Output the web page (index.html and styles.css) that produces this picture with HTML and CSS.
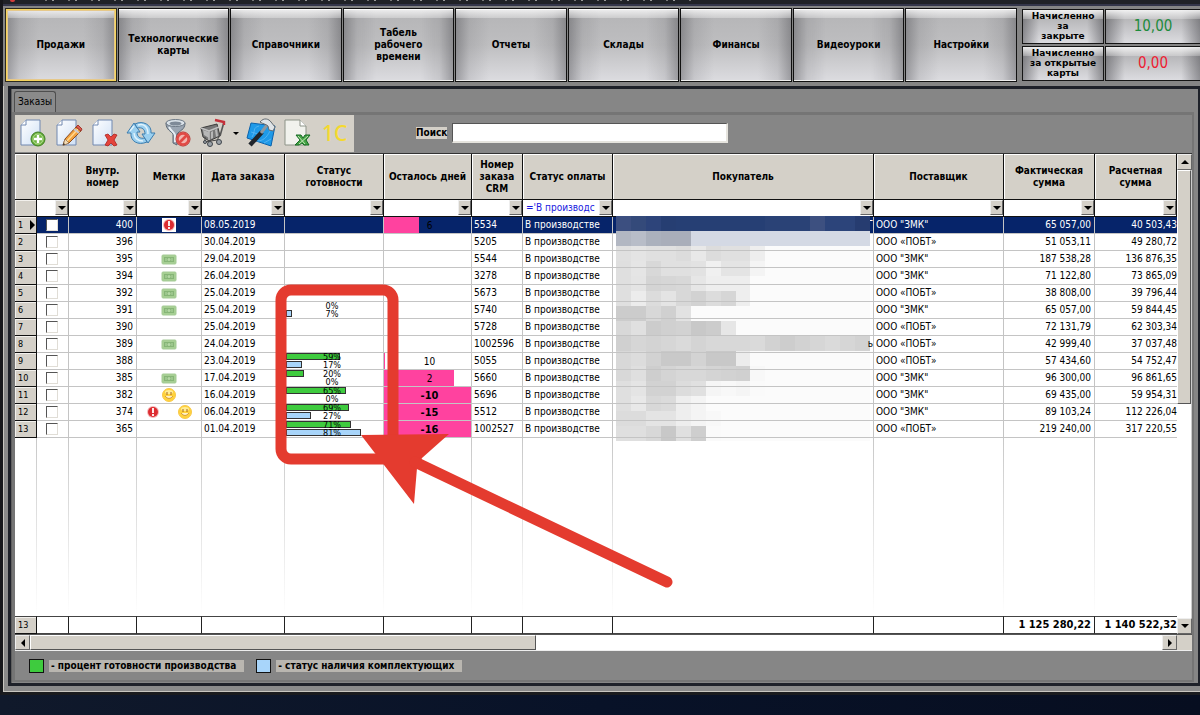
FILE: index.html
```html
<!DOCTYPE html>
<html lang="ru">
<head>
<meta charset="utf-8">
<title>Заказы</title>
<link rel="stylesheet" href="styles.css">
</head>
<body>
<div class="window">
  <div class="titlebar"><span class="title-mark"></span><span class="title-trace"></span></div>
  <header class="ribbon">
    <nav class="menu">
      <button class="tile active">Продажи</button>
      <button class="tile">Технологические<br>карты</button>
      <button class="tile">Справочники</button>
      <button class="tile">Табель<br>рабочего<br>времени</button>
      <button class="tile">Отчеты</button>
      <button class="tile">Склады</button>
      <button class="tile">Финансы</button>
      <button class="tile">Видеоуроки</button>
      <button class="tile">Настройки</button>
    </nav>
    <div class="totals">
      <div class="total-label">Начисленно<br>за<br>закрыте</div><div class="total-value green">10,00</div>
      <div class="total-label">Начисленно<br>за открытые<br>карты</div><div class="total-value red">0,00</div>
    </div>
  </header>
  <main class="panel">
    <div class="tabs"><button class="tab">Заказы</button></div>
    <section class="page">
      <div class="tools-row">
        <div class="toolbar">
          <button class="tool" aria-label="Добавить"><svg viewBox="0 0 30 30"><use href="#doc"/><circle cx="20" cy="21" r="7" fill="#6db33f" stroke="#3d7d22"/><circle cx="20" cy="21" r="5" fill="none" stroke="#b9e098"/><path d="M20 17v8M16 21h8" stroke="#fff" stroke-width="2.4"/></svg></button>
          <button class="tool" aria-label="Изменить"><svg viewBox="0 0 30 30"><use href="#doc"/><path d="M9 27l2-6L22 9l5 4-12 12z" fill="#f3a23c" stroke="#8c4e22"/><path d="M13 23L24 11" stroke="#ffd890" stroke-width="1.6"/><path d="M20 11l5 4" stroke="#c9c9d0" stroke-width="2"/><path d="M22 9l5 4 1-2-4-4z" fill="#db5a4d" stroke="#a3382f"/><path d="M11 21l4 4-6 2.600z" fill="#f4dcb4" stroke="#8c6f52" stroke-width=".7"/><path d="M9 27l.6-2 1.600 1.400z" fill="#222"/></svg></button>
          <button class="tool" aria-label="Удалить"><svg viewBox="0 0 30 30"><use href="#doc"/><path d="M15 17l3-1 3 3 3-3 3 1-3 5 3 5-3 1-3-3-3 3-3-1 3-5z" fill="#e4443c" stroke="#a9231f" stroke-width=".8"/></svg></button>
          <button class="tool" aria-label="Обновить"><svg viewBox="0 0 30 30"><g fill="#9bd0f0" stroke="#3b7cae" stroke-linejoin="round"><path d="M1 15L8 5l6 9h-3c0 5 3 7 8 6l2 4C12 28 4 23 5 15z"/><path d="M29 15l-7 10-6-9h3c0-5-3-7-8-6L9 6c8-4 17 1 16 9z"/></g><path d="M8 8l-4 5M12 7c6-2 10 2 10 9M8 15c0 5 4 8 9 8" fill="none" stroke="#e2f3fc" stroke-width="1.400"/></svg></button>
          <button class="tool" aria-label="Сбросить фильтр"><svg viewBox="0 0 30 30"><path d="M4 5c0 7 5 8 7 11v9l4 2V16c2-3 8-4 8-11z" fill="#9ba6b3" stroke="#5a6674"/><path d="M7 9c2 4 5 5 6 8v7" fill="none" stroke="#e5edf4" stroke-width="2"/><ellipse cx="13.500" cy="5" rx="9.500" ry="3.500" fill="#dbe3ea" stroke="#6c7885"/><ellipse cx="13.500" cy="5.500" rx="6" ry="2" fill="#7e8a98"/><circle cx="21" cy="21" r="7" fill="#f3dada" stroke="#b22b28"/><circle cx="21" cy="21" r="5.500" fill="#f2b5af" stroke="#e14a45" stroke-width="2.400"/><path d="M17 25l8-8" stroke="#e14a45" stroke-width="2.600"/></svg></button>
          <button class="tool cart" aria-label="Корзина"><svg viewBox="0 0 30 30"><path d="M3 10l16-4 3 12-11 5-6-4z" fill="#777" stroke="#3c3c3c"/><path d="M3 10l8 3 10-4M11 13v9" stroke="#c2c2c2" fill="none" stroke-width="1.400"/><path d="M5 12l6 2v6l-5-3zM13 14l2-1v7l-2 1zM17 12l2-1 1 7-2 1z" fill="#b7b7b7"/><path d="M22 18l4-14" stroke="#555" stroke-width="1.600"/><path d="M17 2l9 2v3" stroke="#c4303a" stroke-width="2.400" fill="none"/><path d="M7 19v5l12-2 2-3" stroke="#444" fill="none"/><g fill="#9ba2a8" stroke="#40464c"><circle cx="12" cy="26" r="2.500"/><circle cx="21" cy="24" r="2.500"/><circle cx="7" cy="24" r="1.500"/></g></svg><span class="caret"></span></button>
          <button class="tool" aria-label="Инструменты"><svg viewBox="0 0 30 30"><path d="M5 5l24 3-4 20L1 20z" fill="#1f9ae8" stroke="#0b62ac"/><path d="M6 19c4-6 0-9 7-11M11 23c8 0 11-6 14-12M18 25l7-4M5 14l7 2" stroke="#5fb9f2" fill="none" stroke-width=".8"/><path d="M4 27L16 14" stroke="#20252b" stroke-width="4.500"/><path d="M15 15l6-8" stroke="#8f979e" stroke-width="3"/><path d="M14 4c4-5 9-3 11 0l4 5-2 4-4-1-1-4c-2-2-5-2-8-4z" fill="#dfe4e8" stroke="#626a70"/></svg></button>
          <button class="tool" aria-label="Экспорт в Excel"><svg viewBox="0 0 30 30"><path d="M3 2h15l6 6v19H3z" fill="#f1f2ed" stroke="#8d9388"/><path d="M18 2v6h6" fill="#fff" stroke="#8d9388"/><path d="M14 17h5l2 3 2-3h5l-4 5 3 5h-5l-2-2-3 2h-4l5-5z" fill="#45a345" stroke="#176b25"/><path d="M16 18l7 8M26 18l-9 8" stroke="#c3e7b7"/></svg></button>
          <button class="tool one-c">1C</button>
        </div>
        <label class="search-label" for="search">Поиск</label>
        <input class="search" id="search" type="text">
      </div>
      <div class="grid">
        <div class="grid-body">
          <table class="orders">
            <colgroup><col class="w22"><col class="w32"><col class="w68"><col class="w65"><col class="w83"><col class="w99"><col class="w88"><col class="w51"><col class="w90"><col><col class="w130"><col class="w91"><col class="w82"></colgroup>
            <thead>
              <tr class="heads"><th></th><th></th><th>Внутр.<br>номер</th><th>Метки</th><th>Дата заказа</th><th>Статус<br>готовности</th><th>Осталось дней</th><th>Номер<br>заказа<br>CRM</th><th>Статус оплаты</th><th>Покупатель</th><th>Поставщик</th><th>Фактическая<br>сумма</th><th>Расчетная<br>сумма</th></tr>
              <tr class="filters" id="filters"><td class="rownum"></td></tr>
            </thead>
            <tbody id="rows"></tbody>
            <tfoot><tr><td class="rownum">13</td><td></td><td></td><td></td><td></td><td></td><td></td><td></td><td></td><td></td><td></td><td class="num">1 125 280,22</td><td class="num">1 140 522,32</td></tr></tfoot>
          </table>
          <div class="vscroll"><button class="arrow up" aria-label="Вверх"></button><div class="vthumb"></div><button class="arrow down" aria-label="Вниз"></button></div>
        </div>
        <div class="hscroll"><button class="arrow left" aria-label="Влево"></button><div class="hthumb"></div><button class="arrow right" aria-label="Вправо"></button><span class="corner"></span></div>
      </div>
      <div class="legend">
        <span class="swatch made"></span><span class="legend-text">- процент готовности производства</span>
        <span class="swatch parts"></span><span class="legend-text">- статус наличия комплектующих</span>
      </div>
    </section>
  </main>
</div>
<svg class="callout" viewBox="0 0 1200 715" aria-hidden="true">
  <rect x="281" y="290" width="112" height="169" rx="10" fill="none" stroke="#e43b2f" stroke-width="11"/>
  <path d="M361 435L449 434L422 458L417 468L414 504Z" fill="#e43b2f"/>
  <path d="M415 462L667 582" stroke="#e43b2f" stroke-width="11" stroke-linecap="round"/>
</svg>
<svg class="defs" aria-hidden="true">
  <defs>
    <linearGradient id="paper" x2="1" y2="1"><stop offset="0" stop-color="#fff"/><stop offset="1" stop-color="#cfe0f5"/></linearGradient>
    <g id="doc"><path d="M3 7l5-5h14v25H3z" fill="url(#paper)" stroke="#7088b0"/><path d="M3 7h5V2" fill="#fff" stroke="#7088b0"/></g>
    <g id="cash"><rect x="1" y="1" width="14" height="9" rx="1" fill="#a6cf93" stroke="#a5cb96"/><rect x="3" y="3" width="10" height="5" fill="#86b577"/><circle cx="8" cy="5.500" r="1.500" fill="#b4d8a5"/><path d="M5 4v3M11 4v3" stroke="#b4d8a5"/></g>
    <g id="alert"><circle cx="7" cy="7" r="6" fill="#f5b9b9"/><circle cx="7" cy="7" r="5" fill="#dd2c31"/><path d="M7 3v5M7 9v2" stroke="#fff" stroke-width="1.800"/></g>
    <g id="smile"><circle cx="7" cy="7" r="6.500" fill="#ffd23c" stroke="#f8c848"/><ellipse cx="7" cy="4" rx="4" ry="2" fill="#ffec96"/><path d="M5 4v3M9 4v3" stroke="#a8691c"/><path d="M3 8q4 5 8 0" fill="#fff3c8" stroke="#c98a2c" stroke-width=".8"/></g>
  </defs>
</svg>
<script src="app.js"></script>
</body>
</html>
```

FILE: styles.css
```css
* { box-sizing: border-box; }
html, body { height: 100%; }
body {
  margin: 0;
  background: linear-gradient(90deg, #10192b, #081228 50%, #070e20);
  font-family: "DejaVu Sans Condensed", "DejaVu Sans", "Noto Sans", sans-serif;
  font-size: 10px;
  line-height: 12px;
  color: #000;
  position: relative;
  overflow: hidden;
}
button, input { font: inherit; color: inherit; margin: 0; padding: 0; border: 0; }
.window {
  height: calc(100% - 20px);
  display: flex;
  flex-direction: column;
  background: #8a8a8a;
  border-left: 3px solid #17181c;
  border-bottom: 3px solid #1a1b1e;
  box-shadow: inset 1px -1px 0 #c8c6c0;
}
.titlebar { height: 6px; flex: none; background: #202227; border-bottom: 2px solid #34364a; display: flex; align-items: flex-start; }
.title-mark { width: 5px; height: 2px; margin: 0 30px 0 7px; background: #d33e3c; border-radius: 0 0 3px 3px; }
.title-trace { width: 54%; height: 1px; background: repeating-linear-gradient(90deg, #777 0 2px, transparent 2px 7px, #999 7px 9px, transparent 9px 23px); }

.ribbon { flex: none; display: flex; gap: 5px; padding: 2px 0 4px 2px; background: #858585; }
.menu { flex: 1; display: grid; grid-template-columns: repeat(9, 1fr); gap: 1px; }
.tile {
  height: 74px;
  font-weight: bold;
  background:
    linear-gradient(rgba(255,255,255,.8), rgba(255,255,255,.3) 9px, transparent 9px),
    linear-gradient(90deg, rgba(70,70,75,.42), rgba(90,90,95,.15) 12%, transparent 30%, transparent 70%, rgba(90,90,95,.15) 88%, rgba(70,70,75,.42)),
    linear-gradient(#b4b4b6, #bebec0 50%, #dcdce0);
  border: 1px solid #111;
  box-shadow: inset 0 1px 0 #fff, inset 0 -1px 0 #eee;
}
.tile.active { border-color: #2c2a20; box-shadow: inset 0 0 0 1px #f5d45c, inset 0 0 0 2px #e6c88a; }
.totals { flex: none; width: 178px; display: grid; grid-template-columns: 82px 1fr; gap: 2px 1px; padding: 1px 0; }
.total-label, .total-value {
  border: 1px solid #151515;
  background:
    linear-gradient(rgba(255,255,255,.85), rgba(255,255,255,.25) 9px, transparent 9px),
    linear-gradient(90deg, rgba(70,70,75,.5), transparent 20%, transparent 80%, rgba(70,70,75,.5)),
    linear-gradient(#a9a9ab, #dcdce0);
  height: 35px;
  text-align: center;
}
.total-label { font: bold 9px/10px "DejaVu Sans", sans-serif; padding-top: 1px; overflow: hidden; }
.total-value { font-size: 15px; line-height: 33px; border-right: 0; }
.green { color: #1d8b3c; }
.red { color: #ee1c32; }

.panel {
  flex: 1;
  min-height: 0;
  margin: 0 0 6px 5px;
  display: flex;
  flex-direction: column;
  border: 3px solid #1e2129;
  border-right-width: 2px;
  background: #868686;
  box-shadow: inset 1px 0 0 #5f5f5f;
}
.tabs { padding: 2px 0 0 3px; height: 23px; flex: none; }
.tab { height: 21px; width: 42px; background: #8a8a8a; border: 1px solid #4e4e4e; border-bottom: 0; border-radius: 3px 3px 0 0; }
.page {
  flex: 1;
  min-height: 0;
  display: flex;
  flex-direction: column;
  border: 2px solid #757575;
  border-width: 3px 2px 2px 3px;
  margin: 0 4px 1px 1px;
}
.tools-row { display: flex; align-items: center; flex: none; height: 39px; padding-bottom: 2px; border-bottom: 1px solid #333; }
.toolbar { display: flex; align-items: center; width: 339px; height: 37px; padding-left: 3px; background: #d4d0c8; }
.tool { width: 36px; height: 32px; flex: none; background: transparent; display: flex; align-items: center; }
.tool svg { width: 30px; height: 30px; flex: none; }
.tool.cart { width: 48px; }
.caret { margin-left: 5px; border: 3px solid transparent; border-top-color: #000; border-bottom: 0; }
.one-c { font-family: "Noto Sans", sans-serif; font-size: 21px; color: #f4d92e; font-weight: 500; padding-left: 4px; }
.search-label { margin-left: 62px; font-weight: bold; background: #d4d0c8; }
.search { margin-left: 5px; width: 276px; height: 20px; padding: 0 3px; background: #fff; border: 1px solid #555; border-right: 2px solid #e6e4de; border-bottom: 2px solid #e6e4de; }

.grid { flex: 1; min-height: 0; display: flex; flex-direction: column; background: #fff; border-bottom: 1px solid #eee; }
.grid-body { flex: 1; min-height: 0; display: flex; }
.orders { flex: 1; min-width: 0; width: 100%; height: 100%; table-layout: fixed; border-collapse: separate; border-spacing: 0; }
.w22 { width: 22px; } .w32 { width: 32px; } .w68 { width: 68px; } .w65 { width: 65px; } .w83 { width: 83px; }
.w99 { width: 99px; } .w88 { width: 88px; } .w51 { width: 51px; } .w90 { width: 90px; } .w130 { width: 130px; }
.w91 { width: 91px; } .w82 { width: 82px; }
th, td { padding: 0; white-space: nowrap; }
.heads th { height: 46px; background: #d4d0c8; border-right: 1px solid #111; border-bottom: 1px solid #111; box-shadow: inset 1px 1px 0 #fff; }
.filters td { height: 17px; border-right: 1px solid #111; border-bottom: 1px solid #111; }
.filter { display: flex; height: 16px; }
.filter input { flex: 1; width: 0; min-width: 0; padding-left: 3px; background: #fff; color: #1818e0; }
.filter button, .arrow { flex: none; background: #d4d0c8; border: 1px solid #666; border-top-color: #eee; border-left-color: #eee; display: grid; place-items: center; }
.filter button { width: 13px; height: 15px; }
.filter button::after, .arrow::after { content: ""; border: 4px solid transparent; }
.filter button::after, .down::after { border-top-color: #000; border-bottom-width: 0; }
.up::after { border-bottom-color: #000; border-top-width: 0; }
.arrow.left::after { border-right-color: #000; border-left-width: 0; }
.arrow.right::after { border-left-color: #000; border-right-width: 0; }
.order td { height: 17px; border-right: 1px solid #c4c4c4; border-bottom: 1px solid #c4c4c4; padding-left: 2px; }
.orders td.num { text-align: right; padding: 0 3px 0 0; }
.order td.num:last-child, tfoot td.num:last-child { padding-right: 0; border-right: 0; }
.orders td.rownum { background: #d4d0c8; border-right: 1px solid #111; border-bottom: 1px solid #111; padding-left: 3px; font-size: 9px; box-shadow: inset 1px 1px 0 #f2f0ec; }
.rownum .pointer { float: right; margin: 1px 1px 0 0; border: 5px solid transparent; border-left: 5px solid #000; border-right: 0; }
.order.selected td:not(.rownum) { background-color: #06246a; color: #fff; }
.order td.check { padding: 0 0 0 9px; }
.check input { display: block; appearance: none; width: 12px; height: 12px; background: #fff; border: 1px solid #e0ddd6; border-top: 1px solid #555; border-left: 1px solid #555; }
.order td.marks, .order td.ready, .order td.days { padding: 0; }
.marks div { display: flex; justify-content: center; gap: 18px; }
.marks svg { display: block; }
.selected .marks svg { background: #fff; }
.ready div { position: relative; height: 8px; margin: 0 5px 0 1px; font-size: 9px; line-height: 8px; text-align: center; }
.ready .bar, .days .bar { position: absolute; left: 0; top: 0; }
.ready .bar { height: 7px; border: 1px solid #333; }
.ready span, .days span { position: relative; }
.made { background: #3ecb3e; }
.parts { background: #a8d5fa; }
.days div { position: relative; height: 16px; line-height: 17px; text-align: center; padding-left: 4px; color: #000; }
.days .bar { height: 16px; background: #ff429f; }
.days .late { font-weight: bold; font-size: 11px; }
.buyer { position: relative; }
.orders td.buyer { text-align: right; padding: 0; }
.mosaic { position: absolute; left: 3px; top: -1px; width: calc(100% - 6px); height: 225px; display: grid; grid-template-columns: repeat(17, 1fr); grid-auto-rows: 15px; }
.rest td { background: linear-gradient(#c8c8c8, #fff) right / 1px 100% no-repeat #fff; }
.rest td:last-child { background: #fff; }
tfoot td { height: 18px; border-top: 1px solid #444; border-right: 1px solid #222; border-bottom: 1px solid #444; font-weight: bold; font-size: 11px; }
tfoot td.rownum { font-weight: normal; }

.vscroll { flex: none; width: 15px; display: flex; flex-direction: column; border-right: 1px solid #ccc; }
.vscroll .arrow { width: 15px; height: 16px; }
.vthumb { height: 234px; background: #d4d0c8; border: 1px solid #555; border-top-color: #fff; border-left-color: #fff; }
.down { margin-top: auto; }
.hscroll { flex: none; height: 16px; display: flex; border-top: 1px solid #555; }
.hscroll .arrow { width: 15px; height: 15px; }
.hthumb { width: 43%; background: #d4d0c8; border: 1px solid #555; border-top-color: #fff; border-left-color: #fff; }
.right { margin-left: auto; }
.corner { width: 15px; background: #d4d0c8; }
.legend { flex: none; height: 29px; display: flex; align-items: center; padding-left: 14px; }
.swatch { width: 15px; height: 14px; border: 1px solid #111; margin-right: 5px; }
.legend-text { font-weight: bold; background: #b9b6b0; margin-right: 12px; padding: 0 8px 0 2px; }

.callout { position: absolute; left: 0; top: 0; width: 1200px; height: 715px; pointer-events: none; }
.defs { position: absolute; width: 0; height: 0; }
```

FILE: app.js
```js
const orders = [
  [400, ["alert"], "08.05.2019", null, [6, 40], "5534", 0, "65 057,00", "40 503,43"],
  [396, [], "30.04.2019", null, null, "5205", 1, "51 053,11", "49 280,72"],
  [395, ["cash"], "29.04.2019", null, null, "5544", 0, "187 538,28", "136 876,35"],
  [394, ["cash"], "26.04.2019", null, null, "3278", 0, "71 122,80", "73 865,09"],
  [392, ["cash"], "25.04.2019", null, null, "5673", 1, "38 808,00", "39 796,44"],
  [391, ["cash"], "25.04.2019", [0, 7], null, "5740", 0, "65 057,00", "59 844,45"],
  [390, [], "25.04.2019", null, null, "5728", 1, "72 131,79", "62 303,34"],
  [389, ["cash"], "24.04.2019", null, null, "1002596", 1, "42 999,40", "37 037,48"],
  [388, [], "23.04.2019", [59, 17], [10, 1], "5055", 1, "57 434,60", "54 752,47"],
  [385, ["cash"], "17.04.2019", [20, 0], [2, 80], "5660", 0, "96 300,00", "96 861,65"],
  [382, ["smile"], "16.04.2019", [65, 0], [-10, 100], "5696", 0, "69 435,00", "59 954,31"],
  [374, ["alert", "smile"], "06.04.2019", [69, 27], [-15, 100], "5512", 0, "89 103,24", "112 226,04"],
  [365, [], "01.04.2019", [71, 81], [-16, 100], "1002527", 1, "219 240,00", "317 220,55"]
];
const suppliers = ['ООО "ЗМК"', "ООО «ПОБТ»"];
const tails = { 0: "Г", 7: "ь" };

// Shades of the blurred customer names, one line per band.
const mosaic = [
  "#3c4f80 #344a7a #2d447a #263e72 #263f74 #263f74 #263f74 #263f74 #263f74 #263f74 #2a4276 #2a4276 #2a4276 #3d5080 #2c447a #2c447a #263c70",
  "#b2b7c2 #b8bdc8 #abb1bd #a9aeba #a9aeba",
  "e0 e4 e0 e0 dc e8 dc e0 e0 ee", "df e5 d8 e0 e0 e2 f0 e4 e4 f4", "df e4 d4 d6 d8 e6 ee ee ee",
  "df ec dc e4 d8 d2 dc d6 ee", "cc cc d8 d0 e2", "d8 e0 cc d0 d2 c8 cc e6",
  "d0 d6 d3 d6 da d4 d8 d8 d8 da d2 cd d2 d6 da d6 d2", "d8 dc d2 c9 c9 d3 c8 c8 ec",
  "d8 df ce d4 d8 d8 d4 d2 d0 f8", "df e4 d2 d2 dc e0 f5 f8 f5 fa", "df e8 d8 db ee f4",
  "dc dc e4 e4 ee f4 f8", "df df d8 c8 e0 ce fa"
];
const tiles = mosaic.map((line, row) => {
  const shades = line.split(" ");
  return Array.from({ length: 17 }, (_, i) => {
    const s = shades[i] || (row === 1 ? "#d4d9e4" : "fb");
    return `<i style="background:${s[0] === "#" ? s : "#" + s + s + s}"></i>`;
  }).join("");
}).join("");

const icon = name => name === "cash"
  ? '<svg width="16" height="11"><use href="#cash"/></svg>'
  : `<svg width="14" height="14"><use href="#${name}"/></svg>`;
const bar = (kind, value) =>
  `<div>${value ? `<i class="bar ${kind}" style="width:${value}%"></i>` : ""}<span>${value}%</span></div>`;

document.getElementById("rows").innerHTML = orders.map((o, i) => {
  const [id, marks, date, ready, days, crm, supplier, fact, calc] = o;
  return `<tr class="order${i ? "" : " selected"}">
    <td class="rownum">${i ? "" : '<span class="pointer"></span>'}${i + 1}</td>
    <td class="check"><input type="checkbox" aria-label="Заказ ${id}"></td>
    <td class="num">${id}</td>
    <td class="marks"><div>${marks.map(icon).join("")}</div></td>
    <td>${date}</td>
    <td class="ready">${ready ? bar("made", ready[0]) + bar("parts", ready[1]) : ""}</td>
    <td class="days">${days ? `<div><i class="bar" style="width:${days[1]}%"></i><span class="${days[0] < 0 ? "late" : ""}">${days[0]}</span></div>` : ""}</td>
    <td>${crm}</td>
    <td>В производстве</td>
    <td class="buyer">${tails[i] || ""}${i ? "" : `<div class="mosaic">${tiles}</div>`}</td>
    <td>${suppliers[supplier]}</td>
    <td class="num">${fact}</td>
    <td class="num">${calc}</td></tr>`;
}).join("") + `<tr class="rest">${"<td></td>".repeat(13)}</tr>`;

const heads = [...document.querySelectorAll(".heads th")].slice(1);
document.getElementById("filters").insertAdjacentHTML("beforeend", heads.map((h, i) =>
  `<td><div class="filter"><input type="text" aria-label="Фильтр ${h.textContent}" value="${i === 7 ? "='В производс" : ""}"><button aria-label="Выбрать"></button></div></td>`
).join(""));
```
